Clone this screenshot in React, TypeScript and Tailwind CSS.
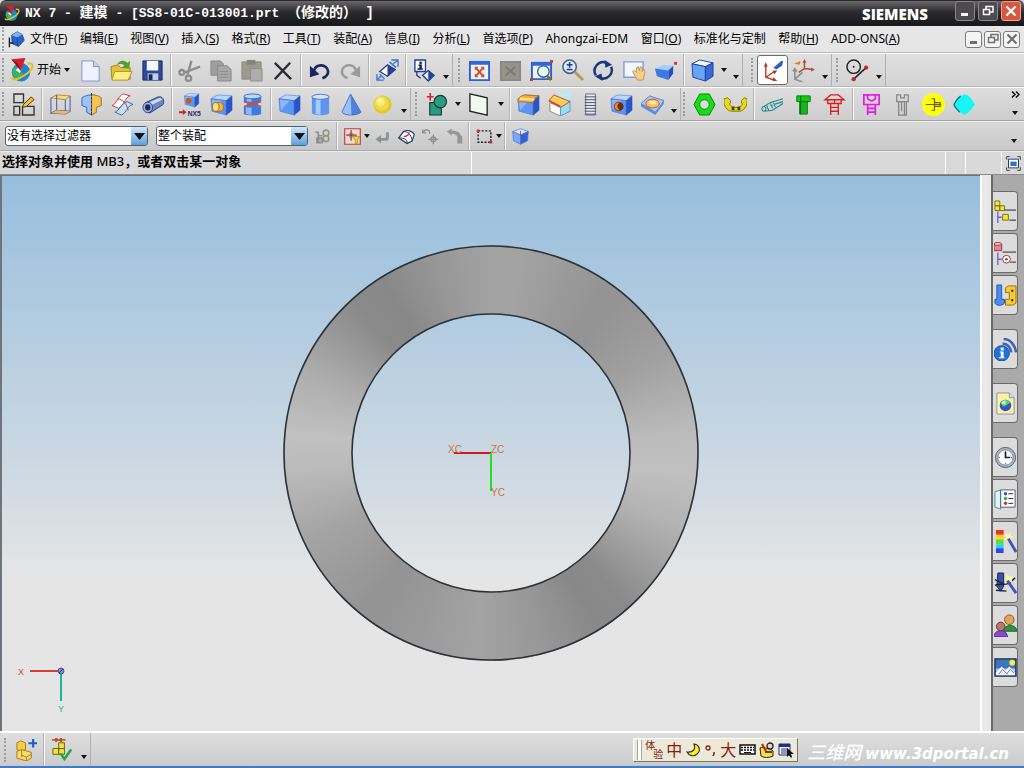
import React from 'react';

interface CubeProps {
  x?: number;
  y?: number;
  s?: number;
}

const Cube: React.FC<CubeProps> = ({ x = 0, y = 0, s = 1 }) => (
  <g transform={`translate(${x} ${y}) scale(${s})`}>
    <path d="M1 6 8 2 23 3 17 8Z" fill="#b9d6ff" stroke="#3b62c4" strokeWidth=".5" />
    <path d="M1 6 17 8V23L2 19Z" fill="#5c96f4" stroke="#3b62c4" strokeWidth=".5" />
    <path d="M2 7 12 8 3 18Z" fill="#8ab8fb" />
    <path d="M17 8 23 3V18L17 23Z" fill="#2856c8" stroke="#2a4cae" strokeWidth=".5" />
  </g>
);

const icons: Record<string, React.ReactNode> = {
  nx: (
    <>
      <circle cx="12" cy="14" r="8.5" fill="#1b86c9" />
      <path d="M5 10a9 9 0 0 0 5 12l4-6-6-7Z" fill="#3bb35d" />
      <path d="M7 12a6 6 0 0 1 6-2l-2 5Z" fill="#d8f4ff" />
      <path d="M3 2 16 1 12 13Z" fill="#d3202c" />
      <path d="M3 2 12 13 9 6Z" fill="#8e1020" />
      <path d="M18 6c7-1 5 5 0 9-5 4-14 8-15 4" fill="none" stroke="#e8bd2c" strokeWidth="2" />
    </>
  ),
  part: (
    <>
      <path d="M5 6 13 1 20 5 23 13 15 22 6 18Z" fill="#2a62c8" stroke="#163c8c" />
      <path d="M5 6 13 1 20 5 13 9Z" fill="#7fb0f2" />
      <path d="M13 9v12" stroke="#163c8c" />
      <path d="M2 9v14M2 17h6" stroke="#222" strokeWidth="2" fill="none" />
    </>
  ),
  new: (
    <>
      <path d="M3 2h12l6 6v15H3Z" fill="#eef3ff" stroke="#7d92cf" />
      <path d="M15 2v6h6" fill="#c3d0f2" stroke="#7d92cf" />
    </>
  ),
  open: (
    <>
      <path d="M1 8 8 6l3 3h10v12H2Z" fill="#e3c238" stroke="#a4851a" />
      <path d="M5 13h18l-4 9H2Z" fill="#fbee83" stroke="#b3942a" />
      <path d="M7 6c3-5 8-5 11-2l3-2-1 8-8-1 3-2c-2-2-5-2-8-1Z" fill="#4fa32c" />
    </>
  ),
  save: (
    <>
      <path d="M2 2h20v20H2Z" fill="#2c4a9c" stroke="#14265e" />
      <path d="M6 2h12v10H6Z" fill="#f4f7ff" />
      <path d="M7 15h11v7H7Z" fill="#c4cde0" />
      <path d="M8 16h4v6H8Z" fill="#14265e" />
    </>
  ),
  cut: (
    <g fill="none" stroke="#8d8d8d" strokeWidth="2.400">
      <path d="M14 2 10 16M23 8 7 14" />
      <circle cx="4" cy="14" r="2.500" />
      <circle cx="11" cy="20" r="2.800" />
    </g>
  ),
  copy: (
    <>
      <path d="M2 2h10l3 3v12H2Z" fill="#9e9e9e" stroke="#8a8a8a" />
      <path d="M9 7h10l4 4v12H9Z" fill="#a8a8a8" stroke="#858585" />
      <path d="M11 13h9M11 16h9M11 19h9" stroke="#8a8a8a" />
    </>
  ),
  paste: (
    <>
      <path d="M2 3h20v18H2Z" fill="#9c9c8c" stroke="#898980" />
      <path d="M7 1h9v5H7Z" fill="#858580" />
      <path d="M11 10h12v13H11Z" fill="#adadab" stroke="#8c8c8c" />
    </>
  ),
  delete: <path d="M4 4 21 21M20 4 4 21" stroke="#2d2d35" strokeWidth="2.400" fill="none" />,
  undo: (
    <>
      <path d="M6 13c2-9 14-8 15 0 0 4-3 6-6 7" fill="none" stroke="#1c2464" strokeWidth="2.800" />
      <path d="M2 7v12l10-3Z" fill="#1c2464" />
    </>
  ),
  redo: (
    <>
      <path d="M18 13C16 4 4 5 3 13c0 4 3 6 6 7" fill="none" stroke="#9b9b9b" strokeWidth="2.600" />
      <path d="M22 7v12l-10-3Z" fill="#9b9b9b" />
    </>
  ),
  orient: (
    <>
      <path d="M4 13 12 6 20 11 12 18Z" fill="#fff" stroke="#24408e" strokeWidth="1.400" />
      <path d="M12 6 20 11 12 18Z" fill="#24408e" />
      <path d="M1 16v6h7M16 1h7v7M1 22l4-4M23 1l-5 4M4 16l5 5M14 3l7 6" fill="none" stroke="#3c74cc" strokeWidth="1.400" />
    </>
  ),
  info: (
    <>
      <path d="M2 1h11v12H2Z" fill="#fff" stroke="#24408e" strokeWidth="1.400" />
      <path d="M7 3h2v2H7ZM6 6h3v4h1v1H5v-1h2V7H6Z" fill="#10205a" stroke="#10205a" strokeWidth=".6" />
      <path d="M10 17 16 12 22 17 16 23Z" fill="#e6efff" stroke="#24408e" strokeWidth="1.400" />
      <path d="M16 12 22 17 16 23Z" fill="#24408e" />
      <path d="M4 13v4l4 3" fill="none" stroke="#24408e" strokeWidth="1.400" />
    </>
  ),
  fit: (
    <>
      <path d="M2 3h20v19H2Z" fill="#eaf1ff" stroke="#2f5fc8" strokeWidth="2" />
      <path d="M2 2h20v4H2Z" fill="#2f66d8" />
      <path d="M8 9l8 9M16 9l-8 9" stroke="#d4501c" strokeWidth="2" />
      <path d="M7 8h4L7 12ZM17 8h-4l4 4ZM7 19h4l-4-4ZM17 19h-4l4-4Z" fill="#d4501c" />
    </>
  ),
  fitGray: (
    <>
      <path d="M2 3h20v19H2Z" fill="#94948c" stroke="#888" strokeWidth="2" />
      <path d="M7 8l10 9M17 8 7 17" stroke="#7c7c70" strokeWidth="2" />
    </>
  ),
  zoomWindow: (
    <>
      <path d="M2 4h20v17H2Z" fill="#eef4ff" stroke="#2f5fc8" strokeWidth="2" />
      <path d="M2 3h20v4H2Z" fill="#2f66d8" />
      <circle cx="14" cy="13" r="6" fill="#e4fbff" stroke="#34608a" strokeWidth="1.400" />
      <path d="M18 18l4 4" stroke="#8a6a20" strokeWidth="2.600" />
      <path d="M0 20h3v3H0ZM21 1h3v3h-3Z" fill="#d83030" />
    </>
  ),
  zoom: (
    <>
      <circle cx="9" cy="8" r="7" fill="#dceaff" stroke="#53607c" strokeWidth="1.600" />
      <path d="M9 3v6M6 6h6M6 11h6" stroke="#1c3c9c" strokeWidth="1.600" />
      <path d="M14 13l9 9" stroke="#b89a52" strokeWidth="3" />
    </>
  ),
  rotate: (
    <>
      <path d="M4 17A9 9 0 0 1 15 4M20 8A9 9 0 0 1 9 20" fill="none" stroke="#1d377d" strokeWidth="2.600" />
      <path d="M13 1l8 5-7 3ZM11 23l-8-5 7-3Z" fill="#1d377d" />
    </>
  ),
  pan: (
    <>
      <path d="M1 3h20v16H1Z" fill="#f3f7ff" stroke="#7f9edc" strokeWidth="1.500" />
      <path d="M10 13l2-1 2 2V9l2-1 1 4 1-4 2 1v4l2-2 1 2-2 9h-6Z" fill="#f7cf8a" stroke="#b9843a" strokeWidth=".8" />
    </>
  ),
  perspective: (
    <>
      <path d="M1 10 10 6l10 1-5 5Z" fill="#a8ccff" />
      <path d="M1 10l14 2v10L3 18Z" fill="#3d7ae0" />
      <path d="M15 12l5-5v8l-5 7Z" fill="#2450b8" />
      <path d="M21 3h3v3h-3Z" fill="#d83030" />
    </>
  ),
  shaded: (
    <>
      <path d="M1 5 9 1 23 4 15 8Z" fill="#f4faff" stroke="#1d44a2" />
      <path d="M1 5l14 3v15L2 19Z" fill="#68a4f7" stroke="#1d44a2" />
      <path d="M15 8l8-4v14l-8 5Z" fill="#3668d6" stroke="#1d44a2" />
    </>
  ),
  wcs: (
    <>
      <path d="M5 6v13l9 3M5 19l9-6" fill="none" stroke="#b63522" strokeWidth="1.400" />
      <path d="M3 8l2-5 2 5ZM12 12l5 0-3 4ZM13 19l4 4-5 0Z" fill="#b63522" />
      <path d="M13 9l8-7 2 0-1 5-6 4Z" fill="#2b5fc4" />
    </>
  ),
  wcsDynamic: (
    <>
      <path d="M3 11v10l8 3M3 21l8-7M1 13l2-3 2 3" fill="none" stroke="#8d8d8d" strokeWidth="1.600" />
      <path d="M13 2v8l9 1M13 10l-6 4" fill="none" stroke="#b84434" strokeWidth="1.500" />
      <path d="M2 5l7-3-1 4Z" fill="#e07a2a" />
      <path d="M11 4l2-4 2 4ZM20 9l4 2-4 2Z" fill="#b84434" />
    </>
  ),
  curve: (
    <>
      <circle cx="8" cy="8" r="7" fill="none" stroke="#222" strokeWidth="1.500" />
      <circle cx="8" cy="8" r="1" fill="#222" />
      <path d="M8 21 21 9" stroke="#222" strokeWidth="1.600" />
      <circle cx="8" cy="21" r="2.200" fill="#c32828" />
      <circle cx="21" cy="9" r="2.200" fill="#c32828" />
    </>
  ),
  sketch: (
    <>
      <path d="M2 1h10v9H2ZM2 14h6v9H2ZM11 14h12v9H11Z" fill="none" stroke="#333" strokeWidth="1.400" />
      <path d="M12 12 20 4l3 3-8 7-4 1Z" fill="#f2c132" stroke="#4a3a12" />
    </>
  ),
  extrude: (
    <>
      <path d="M2 5 8 2l14 1-5 4Z" fill="#f8dc7a" stroke="#b98d2a" />
      <path d="M2 5v16l6-3 14 1V3M17 7v15M8 2v16M2 21l15 1 5-3" fill="none" stroke="#4262b4" strokeWidth="1.100" />
      <path d="M2 21l6-3 14 1-5 3Z" fill="#f6b45a" />
    </>
  ),
  revolve: (
    <>
      <path d="M2 5c6-4 14-4 20 0v8l-5 2v5l-5 3-5-3v-5l-5-2Z" fill="#9cc3f7" stroke="#3a63b4" />
      <path d="M12 2c4 0 8 1 10 3v8l-5 2v5l-5 3Z" fill="#f6c453" stroke="#b3802a" />
      <path d="M12 0v24" stroke="#234" strokeDasharray="3 1" />
    </>
  ),
  sweep: (
    <>
      <path d="M1 13C5 13 8 2 13 1l7 2c-5 1-7 11-12 13Z" fill="#fff" stroke="#c23a3a" />
      <path d="M4 20C9 19 11 10 17 9l6 3c-6 1-7 9-12 11Z" fill="#bfe0f5" stroke="#3a6aa8" />
      <path d="M7 6c5 1 9 4 11 12" fill="none" stroke="#c23a3a" />
    </>
  ),
  tube: (
    <>
      <path d="M4 10 17 4c4-1 7 3 5 8L8 21Z" fill="#6f88c2" stroke="#2c3f7a" />
      <path d="M7 10 19 5l2 2-12 6Z" fill="#cddcf7" />
      <ellipse cx="6" cy="15" rx="5" ry="5.500" fill="#9cb2e2" stroke="#2c3f7a" />
      <ellipse cx="6" cy="15" rx="2.800" ry="3.200" fill="#1d2852" />
    </>
  ),
  nx5: (
    <>
      <Cube x={5} y={-1} s={0.68} />
      <circle cx="10" cy="8" r="3" fill="#c85a1c" />
      <path d="M0 19h4v-2l4 3-4 3v-2H0Z" fill="#d82020" />
      <text x="9" y="24" fontSize="7" fontWeight="bold" fill="#222a66" fontFamily="Liberation Sans, sans-serif">NX5</text>
    </>
  ),
  boss: (
    <>
      <Cube />
      <path d="M6 10h5c4 0 4 9 0 9H6Z" fill="#f4b83a" stroke="#a86a14" />
      <ellipse cx="6" cy="14.500" rx="3.500" ry="4.500" fill="#fbe08a" stroke="#a86a14" />
    </>
  ),
  groove: (
    <>
      <path d="M3 3h18v7h-3v4h3v8c-3 2-15 2-18 0v-8h3v-4H3Z" fill="#3f78de" />
      <path d="M6 4h5v5H6ZM5 15h6v8l-6-1Z" fill="#8db9fb" />
      <ellipse cx="12" cy="3.500" rx="9" ry="2.500" fill="#bcd8ff" stroke="#4068b8" />
      <path d="M3 9c5 2 13 2 18 0M3 14c5-2 13-2 18 0" fill="none" stroke="#d4502c" strokeWidth="1.400" />
    </>
  ),
  block: <Cube />,
  cylinder: (
    <>
      <path d="M3 4v17c4 3 14 3 18 0V4Z" fill="#5e95ee" />
      <path d="M7 5h5v18l-5-1Z" fill="#a8cbff" />
      <ellipse cx="12" cy="4" rx="9" ry="2.600" fill="#d4e6ff" stroke="#4a76c8" />
    </>
  ),
  cone: (
    <>
      <path d="M11 1 22 20c-5 4-17 4-20 0Z" fill="#4f80e0" />
      <path d="M11 1 12 23C8 23 3 22 2 20Z" fill="#9cc0fb" />
      <path d="M11 1 22 20c-5 4-17 4-20 0Z" fill="none" stroke="#2e55b0" strokeWidth=".7" />
    </>
  ),
  sphere: (
    <>
      <circle cx="12" cy="12" r="9.500" fill="#e2c828" />
      <circle cx="11" cy="11" r="7.500" fill="#efdc44" />
      <circle cx="10" cy="9" r="4.500" fill="#f8ec78" />
      <circle cx="9" cy="8" r="2" fill="#fdf8b0" />
    </>
  ),
  unite: (
    <>
      <path d="M5 10h12v13H5Z" fill="#2a9c80" stroke="#123c34" strokeWidth="1.200" />
      <circle cx="16" cy="9" r="6.500" fill="#2a9c80" stroke="#123c34" strokeWidth="1.200" />
      <path d="M2 4h7M5.500 0v8" stroke="#d22" strokeWidth="1.600" />
    </>
  ),
  datum: <path d="M2 1 20 5V23L2 19Z" fill="#f0faef" stroke="#222" strokeWidth="1.400" />,
  edgeBlend: (
    <>
      <Cube />
      <path d="M1 8c0-3 3-5 7-6l15 1c-4 1-6 3-6 7L1 9Z" fill="#f9a93c" stroke="#b2701c" />
      <path d="M3 6l15 1" stroke="#ffe58a" strokeWidth="2.400" />
    </>
  ),
  chamfer: (
    <>
      <path d="M2 10l11 5v9L2 19Z" fill="#fff" stroke="#a8805a" />
      <path d="M13 15 23 8v11l-10 5Z" fill="#9adcf4" stroke="#5a9cc4" />
      <path d="M9 0h15v8Z" fill="#b4ecfa" />
      <path d="M1 8 6 2l17 7-10 6Z" fill="#f8cf5e" stroke="#c0522a" />
      <path d="M1 8l12 6" stroke="#d83a2a" strokeWidth="1.600" />
    </>
  ),
  thread: (
    <>
      <path d="M7 1h10v22H7Z" fill="#e6e9f2" stroke="#666d80" />
      <path d="M6 4h12M6 7h12M6 10h12M6 13h12M6 16h12M6 19h12M6 22h12" stroke="#4a5266" />
    </>
  ),
  hole: (
    <>
      <Cube />
      <circle cx="9" cy="14" r="4.500" fill="#f08a2c" stroke="#7c3410" />
      <path d="M10 10a4 4 0 0 1 0 8c-3-2-3-6 0-8Z" fill="#6c2c10" />
    </>
  ),
  emboss: (
    <>
      <path d="M0 11 9 3l15 5-9 12Z" fill="#a8c8f4" stroke="#5c83c4" />
      <path d="M0 11v3l15 9v-3ZM15 23l9-12V8l-9 12Z" fill="#5d8ce0" />
      <ellipse cx="12" cy="11" rx="7" ry="4.500" fill="#f9c65a" stroke="#d0502a" />
      <ellipse cx="12" cy="10" rx="4" ry="2" fill="#ffeeb0" />
    </>
  ),
  hexNut: (
    <>
      <path d="M7 1h10l6 11-6 11H7L1 12Z" fill="#12e012" stroke="#08820c" />
      <circle cx="12" cy="12" r="5" fill="#dcdcdc" stroke="#08820c" />
    </>
  ),
  clamp: (
    <>
      <path d="M0 6l4-1 3 3-1 4 3 3h7l3-3-1-4 3-3 3 1c1 7-3 13-8 13H8C3 19-1 13 0 6Z" fill="#e8da18" stroke="#887c08" />
      <path d="M8 14h3v4H8ZM14 14h3v4h-3Z" fill="#4c4408" />
    </>
  ),
  pin: (
    <g fill="none" stroke="#1c8a8e" strokeWidth="1.100">
      <path d="M3 14 10 10l13-4M4 19l8-1 11-7M6 13l2 5M10 11l2 5M13 10l2 5M10 13l13-4" />
      <ellipse cx="3" cy="16.500" rx="2" ry="2.500" />
    </g>
  ),
  bolt: (
    <>
      <path d="M5 3h14v6H5Z" fill="#12c81a" stroke="#087a0c" />
      <path d="M8 9h8v13H8Z" fill="#18b420" stroke="#087a0c" />
      <path d="M9 3v19" stroke="#086a0c" />
    </>
  ),
  valve: (
    <path d="M8 2h8l6 5H2ZM5 7v4h14V7M8 11v12M16 11v12M8 15h8M8 19h8M12 7v4" fill="none" stroke="#da2020" strokeWidth="1.400" />
  ),
  screwM: (
    <path d="M4 2h16v10H4ZM8 12v11M16 12v11M8 16h8M8 20h8M8 2v4l3 2h2l3-2V2" fill="none" stroke="#e61ae6" strokeWidth="1.800" />
  ),
  screwG: (
    <path d="M6 2h4v3h4V2h4v7H6ZM8 9v14h8V9M11 9v10M14 9v14" fill="none" stroke="#858585" strokeWidth="1.300" />
  ),
  yellowDot: (
    <>
      <circle cx="12" cy="12" r="12" fill="#fdfd12" />
      <path d="M4 12h9M10 6h3v12h-3M13 12h7M13 10h6v4h-6" fill="none" stroke="#6a6400" strokeWidth="1.300" />
    </>
  ),
  cyanDot: (
    <>
      <path d="M12 1C18 3 20 7 23 12c-3 4-6 8-11 11C7 20 3 17 1 12 4 7 7 4 12 1Z" fill="#16f6f6" />
      <path d="M8 3C4 6 3 8 1 12c1 3 3 5 6 8" fill="none" stroke="#0f7c7c" strokeWidth="1.400" />
    </>
  ),
  findGray: (
    <>
      <path d="M2 6h4v5h6M6 11v9M4 14h8v7H4Z" fill="#a7a7a7" stroke="#8e8e8e" strokeWidth="2" />
      <circle cx="17" cy="7" r="4" fill="none" stroke="#959580" strokeWidth="2.200" />
      <circle cx="17" cy="15" r="4" fill="none" stroke="#959580" strokeWidth="2.200" />
    </>
  ),
  snap: (
    <>
      <path d="M1 1h22v22H1Z" fill="#f3d8d0" stroke="#c43a3a" strokeWidth="1.600" />
      <path d="M10 3v15M3 10h15" stroke="#333" strokeWidth="1.400" />
      <circle cx="10" cy="10" r="3" fill="none" stroke="#c43a3a" />
      <path d="M12 12h10l-3 5v5h-3v-5Z" fill="#f4d231" stroke="#a68a14" />
    </>
  ),
  back: <path d="M21 6v8c0 3-2 4-5 4h-6v4l-8-6 8-6v4h5c2 0 2-1 2-3V6Z" fill="#8d9494" />,
  face: (
    <>
      <path d="M1 14 8 5c5-3 12-1 15 4l-3 9-7 4Z" fill="#fff" stroke="#28365c" strokeWidth="1.600" />
      <path d="M8 5c6 0 10 4 12 12M13 22c0-6-4-8-12-8" fill="none" stroke="#28365c" strokeWidth="1.400" />
      <path d="M8 12c4 0 7-2 8-6" fill="none" stroke="#d83a3a" strokeWidth="1.600" />
    </>
  ),
  rotatePoint: (
    <g fill="none" stroke="#8e8e8e" strokeWidth="1.800">
      <path d="M2 6c2-5 9-5 9 2M1 2v5h5" />
      <circle cx="16" cy="16" r="3.500" />
      <path d="M16 9v14M9 16h14" />
    </g>
  ),
  rotateCut: <path d="M1 5 8 1v3c8 0 12 2 13 7l2 1v10h-7V12c-2-3-5-4-8-4v3Z" fill="#969696" />,
  marquee: (
    <>
      <path d="M3 4h18v16H3Z" fill="none" stroke="#222" strokeWidth="2" strokeDasharray="3 2" />
      <path d="M1 2h4v4H1ZM19 18h4v4h-4Z" fill="#d83030" />
    </>
  ),
  cubeWire: (
    <>
      <path d="M1 5 12 1l11 4-11 5Z" fill="#dbe9ff" stroke="#4b76d4" />
      <path d="M1 5l11 5v13L2 18Z" fill="#78a8f7" stroke="#4b76d4" />
      <path d="M12 10l11-5-1 13-10 5Z" fill="#2e62d6" stroke="#4b76d4" />
      <path d="M12 4v7" stroke="#d83030" strokeWidth="1.200" />
    </>
  ),
  fullscreen: (
    <>
      <path d="M1 6V1h5M18 1h5v5M23 18v5h-5M6 23H1v-5" fill="none" stroke="#444" strokeWidth="1.600" />
      <path d="M4 5h16v14H4Z" fill="#fff" stroke="#244060" strokeWidth="1.600" />
      <path d="M7 9h10v7H7Z" fill="#2f72c4" />
    </>
  ),
  assemblyNav: (
    <>
      <path d="M1 1h5v5H1ZM1 6h5v5H1ZM6 6h5v5H6ZM9 15h6v6H9Z" fill="#f3e63a" stroke="#7d720e" />
      <path d="M11 10.500h12" stroke="#222" />
      <path d="M4 12v12M4 18h4" stroke="#6a5fd0" strokeWidth="1.400" />
      <path d="M16 21h7" stroke="#222" />
    </>
  ),
  partNav: (
    <>
      <path d="M0 2h8v7H0Z" fill="#e08a90" stroke="#9c3038" />
      <ellipse cx="4" cy="2" rx="4" ry="1.500" fill="#f8d0d0" stroke="#9c3038" />
      <path d="M9 10.500h14M17 21h6" stroke="#222" />
      <path d="M4 11v13M4 18h4" stroke="#6a5fd0" strokeWidth="1.400" />
      <circle cx="13" cy="18" r="4" fill="#fff" stroke="#9c3038" />
      <circle cx="13" cy="18" r="1.300" fill="#9c3038" />
    </>
  ),
  reuse: (
    <>
      <path d="M3 1h5v15h3v4c-3 3-8 3-10 0v-4h2Z" fill="#4e8cf0" stroke="#2455b0" />
      <path d="M12 4l3-2h8v18l-3 2h-8v-6h4V9h-4Z" fill="#f5cb31" stroke="#96700c" />
      <path d="M18 6h2v2h-2ZM18 16h2v2h-2Z" fill="#222" />
    </>
  ),
  web: (
    <>
      <path d="M10 1c7 0 12 6 13 14M9 6c5 0 8 3 9 9" fill="none" stroke="#3c62ba" strokeWidth="2.600" />
      <circle cx="8" cy="16" r="8" fill="#1f72d8" stroke="#164a9c" />
      <path d="M7 10h3v3H7ZM6 14h4v6h1v1H5v-1h2v-5H6Z" fill="#fff" />
    </>
  ),
  history: (
    <>
      <path d="M3 1h13l5 5v17H3Z" fill="#fbf3a0" stroke="#8a92a8" />
      <path d="M16 1v5h5" fill="#cfd8ee" stroke="#8a92a8" />
      <circle cx="12" cy="14" r="6" fill="#3b52c4" />
      <path d="M7 11c3-4 8-4 10 0l-6 4c-2 0-4-2-4-4Z" fill="#5cd070" />
      <path d="M8 12a4 4 0 0 1 4-3v4Z" fill="#d4f4e4" />
    </>
  ),
  clock: (
    <>
      <circle cx="12" cy="12" r="10.500" fill="#a9bccd" stroke="#4c5c6c" />
      <circle cx="12" cy="12" r="8" fill="#fff" stroke="#6f8496" />
      <path d="M12 6v6h5" fill="none" stroke="#222" strokeWidth="1.800" />
      <path d="M12 5v1M12 18v1M5 12h1M18 12h1" stroke="#222" />
    </>
  ),
  roles: (
    <>
      <path d="M1 4 7 2v20l-6-2Z" fill="#d9f5f5" stroke="#4c8c94" />
      <path d="M7 2h15v18H7Z" fill="#fff" stroke="#555c70" />
      <path d="M15 6h5M15 11h5M15 16h5" stroke="#222" />
      <circle cx="12" cy="6" r="1.800" fill="#3558c8" />
      <circle cx="12" cy="11" r="1.800" fill="#32b04c" />
      <circle cx="12" cy="16" r="1.800" fill="#d02c50" />
    </>
  ),
  palette: (
    <>
      <path d="M2 0h8v5H2Z" fill="#f03020" />
      <path d="M2 5h8v5H2Z" fill="#f8d820" />
      <path d="M2 10h8v5H2Z" fill="#58e040" />
      <path d="M2 15h8v4H2Z" fill="#28d0f0" />
      <path d="M2 19h8v5H2Z" fill="#3048e8" />
      <path d="M12 3l3 2 3-3-1 4 4 1-4 2v4l-3-3-4 1 2-3Z" fill="#fbf8a0" />
      <path d="M15 9 23 23" stroke="#4452ba" strokeWidth="3" />
    </>
  ),
  wizard: (
    <>
      <path d="M4 1h6v14l-3 5-4-5Z" fill="#3c50a8" stroke="#17235c" />
      <path d="M1 14c5-3 12 3 21-8M2 19l11 1M1 8l8 4" fill="none" stroke="#222" strokeWidth="1.400" />
      <path d="M13 2l3 3 4-1-2 4 2 3-5-1-3 3v-5Z" fill="#fbf8a0" />
      <path d="M14 9 23 22" stroke="#4452ba" strokeWidth="3" />
    </>
  ),
  users: (
    <>
      <path d="M10 18c0-8 14-8 14 0Z" fill="#2f9440" stroke="#1c6628" />
      <circle cx="16" cy="6" r="5" fill="#dfa55c" stroke="#8c5a1c" />
      <path d="M0 24c0-9 14-9 14 0Z" fill="#8848d0" stroke="#55289c" />
      <circle cx="7" cy="13" r="4.500" fill="#b87a68" stroke="#60342a" />
    </>
  ),
  scene: (
    <>
      <path d="M1 3h22v18H1Z" fill="#3c76b8" stroke="#1a2c4c" strokeWidth="1.400" />
      <path d="M2 13h20v3H2Z" fill="#9cc4e8" />
      <path d="M2 20v-3l6-6 4 4 4-4 6 6v3Z" fill="#f2f5ff" />
      <path d="M5 19l4-5 5 5M13 19l4-5 4 4" fill="none" stroke="#6a70b8" />
      <circle cx="19" cy="7" r="3" fill="#f8ec50" />
    </>
  ),
  addPart: (
    <>
      <path d="M3 5 7 3l5 2v7l-5 2-4-2Z" fill="#f6cd48" stroke="#a87c10" />
      <path d="M3 14l5-2 10 3v6l-5 3-10-3Z" fill="#f8dc70" stroke="#a87c10" />
      <path d="M8 18l5 2v4M13 20l5-3M8 12v8" fill="none" stroke="#a87c10" />
      <path d="M20 1v9M15 5.500h9" stroke="#1d5cc8" strokeWidth="2.200" />
    </>
  ),
  constrain: (
    <>
      <path d="M8 5h6v6H8ZM2 11h6v6H2ZM8 11h6v6H8Z" fill="#f3e63a" stroke="#6a6208" />
      <path d="M1 2h4V0l3 2-3 2V2ZM15 2h-4V0L8 2l3 2V2Z" fill="#d05828" stroke="#b04418" />
      <path d="M10 16l4 6 7-10" fill="none" stroke="#1fa838" strokeWidth="2.600" />
    </>
  ),
};

interface IconProps {
  name: string;
  className?: string;
}

const Icon: React.FC<IconProps> = ({ name, className = 'size-[22px]' }) => (
  <svg className={`${className} shrink-0`} viewBox="0 0 24 24" aria-hidden="true">
    {icons[name]}
  </svg>
);

const Arrow = () => (
  <svg className="w-[6px] h-[4px] shrink-0" viewBox="0 0 6 4" aria-hidden="true">
    <path d="M0 0h6L3 4Z" fill="#111" />
  </svg>
);

const Grip = () => (
  <span className="mx-[2px] w-[4px] h-[24px] shrink-0 border-l-2 border-dotted border-[#9c9c9c]" />
);

const Sep = () => (
  <span className="mx-[2px] w-[2px] self-stretch shrink-0 border-l border-[#b4b4b4] bg-[#f6f6f6]" />
);

const Tool: React.FC<{ name: string; active?: boolean; small?: boolean }> = ({ name, active, small }) => (
  <button
    aria-label={name}
    className={`flex items-center justify-center shrink-0 ${small ? 'w-[24px] h-[24px]' : 'w-[31px] h-[30px]'} ${
      active ? 'bg-white border border-[#6c6c6c] rounded-[3px]' : ''
    }`}
  >
    <Icon name={name} className={small ? 'size-[17px]' : 'size-[23px]'} />
  </button>
);

const Drop: React.FC<{ small?: boolean }> = ({ small }) => (
  <button
    aria-label="More"
    className={`flex items-center justify-center h-[24px] shrink-0 ${small ? 'w-[6px]' : 'w-[12px]'}`}
  >
    <Arrow />
  </button>
);

const Overflow = () => (
  <button aria-label="Toolbar options" className="flex items-end justify-center w-[12px] h-[18px] shrink-0 self-end pb-[7px]">
    <Arrow />
  </button>
);

// '|' separator, '~' grip, 'v' drop-down arrow, '.' toolbar overflow
const Tools: React.FC<{ items: string[]; small?: boolean }> = ({ items, small }) => (
  <>
    {items.map((item, i) => {
      if (item === '|') return <Sep key={i} />;
      if (item === '~') return <Grip key={i} />;
      if (item === 'v') return <Drop key={i} small={small} />;
      if (item === '.') return <Overflow key={i} />;
      return <Tool key={i} name={item} small={small} active={item === 'wcs'} />;
    })}
  </>
);

const Group: React.FC<{ children: React.ReactNode; className?: string }> = ({ children, className = '' }) => (
  <div className={`flex items-center shrink-0 border-r border-[#b0b0b0] ${className}`}>{children}</div>
);

const menus: [string, string][] = [
  ['文件', 'F'],
  ['编辑', 'E'],
  ['视图', 'V'],
  ['插入', 'S'],
  ['格式', 'R'],
  ['工具', 'T'],
  ['装配', 'A'],
  ['信息', 'I'],
  ['分析', 'L'],
  ['首选项', 'P'],
  ['Ahongzai-EDM', ''],
  ['窗口', 'O'],
  ['标准化与定制', ''],
  ['帮助', 'H'],
  ['ADD-ONS', 'A'],
];

const WindowGlyph: React.FC<{ kind: string }> = ({ kind }) => (
  <svg className="size-[12px]" viewBox="0 0 12 12" fill="none" stroke="currentColor" aria-hidden="true">
    {kind === 'min' && <path d="M2 9.500h7" strokeWidth="3" />}
    {kind === 'max' && <path d="M4 4V1.500h7V7H8M1.500 4.500h6v5h-6Z" strokeWidth="1.500" />}
    {kind === 'close' && <path d="M1.500 1.500l9 9M10.500 1.500l-9 9" strokeWidth="2.200" />}
  </svg>
);

const TitleBar = () => (
  <header className="flex items-center h-[26px] shrink-0 bg-linear-to-b from-[#6a686c] via-[#2b2a2d] via-45% to-[#18181a] border-t border-[#2a2a2a] rounded-t-md pl-[3px] pr-[3px]">
    <Icon name="nx" className="size-[17px]" />
    <h1 className="ml-[5px] flex-1 text-white font-bold text-[13px] whitespace-pre font-['Liberation_Mono','Noto_Sans_CJK_SC',monospace]">
      NX 7 - <span className="text-[14px]">建模</span> - [SS8-01C-013001.prt <span className="text-[14px]">（修改的） ]</span>
    </h1>
    <span className="mr-[27px] text-white font-extrabold text-[15px] font-['Open_Sans',sans-serif]">SIEMENS</span>
    <div className="flex gap-[3px] self-start">
      {['min', 'max', 'close'].map((kind) => (
        <button
          key={kind}
          aria-label={kind}
          className={`flex items-center justify-center size-[20px] rounded-[3px] border text-white ${
            kind === 'close' ? 'bg-[#d9573f] border-[#f0a090]' : 'bg-[#4d4b4f] border-[#8a888c]'
          }`}
        >
          <WindowGlyph kind={kind} />
        </button>
      ))}
    </div>
  </header>
);

const MenuBar = () => (
  <nav className="flex items-center h-[27px] shrink-0 bg-[#e6e6e6] border-b border-[#bdbdbd] pr-[4px]">
    <Grip />
    <Icon name="part" className="size-[17px]" />
    <div className="flex flex-1 justify-between ml-[5px] mr-[65px] whitespace-nowrap">
      {menus.map(([label, key]) => (
        <button key={label}>
          {label}
          {key && (
            <>
              (<u>{key}</u>)
            </>
          )}
        </button>
      ))}
    </div>
    <div className="flex gap-[2px] text-[#707070]">
      {['min', 'max', 'close'].map((kind) => (
        <button
          key={kind}
          aria-label={`${kind} document`}
          className="flex items-center justify-center size-[17px] rounded-[3px] border border-[#7c7c7c] bg-[#f4f4f4]"
        >
          <WindowGlyph kind={kind} />
        </button>
      ))}
    </div>
  </nav>
);

const StandardBar = () => (
  <div className="flex h-[34px] shrink-0 border-t border-t-white border-b border-b-[#b9b9b9] bg-linear-to-b from-[#e0e0e0] to-[#d2d2d2]">
    <Group>
      <Grip />
      <button className="flex items-center gap-[3px] w-[67px] shrink-0">
        <Icon name="nx" className="size-[26px]" />
        <span className="whitespace-nowrap">开始</span>
        <Arrow />
      </button>
      <Tools items={['new', 'open', 'save', '|', 'cut', 'copy', 'paste', 'delete', '|', 'undo', 'redo', '|', 'orient', '|', 'info', '.']} />
    </Group>
    <Group className="pl-[3px]">
      <Tools items={['~', 'fit', 'fitGray', 'zoomWindow', 'zoom', 'rotate', 'pan', 'perspective', '|', 'shaded', 'v', '.']} />
    </Group>
    <Group className="pl-[6px]">
      <Tools items={['~', 'wcs', 'wcsDynamic', '.']} />
    </Group>
    <Group className="pl-[2px]">
      <Tools items={['~', 'curve', '.']} />
    </Group>
  </div>
);

const FeatureBar = () => (
  <div className="flex h-[34px] shrink-0 border-t border-t-white border-b border-b-[#a5a5a5] bg-linear-to-b from-[#dedede] to-[#cecece]">
    <Group>
      <Tools
        items={['~', 'sketch', '|', 'extrude', 'revolve', 'sweep', 'tube', '|', 'nx5', 'boss', 'groove', '|', 'block', 'cylinder', 'cone', 'sphere', '.']}
      />
    </Group>
    <Group className="pl-[2px]">
      <Tools items={['~', 'unite', 'v', 'datum', 'v', '|', 'edgeBlend', 'chamfer', 'thread', 'hole', 'emboss', '.']} />
    </Group>
    <div className="flex items-center flex-1 min-w-0">
      <Tools items={['~', 'hexNut', 'clamp', '|', 'pin', 'bolt', 'valve', '|', 'screwM', 'screwG', 'yellowDot', 'cyanDot']} />
      <button aria-label="More buttons" className="flex flex-col items-center justify-between ml-auto mr-[4px] h-[26px] w-[10px] pb-[2px]">
        <svg className="w-[9px] h-[7px]" viewBox="0 0 9 7" fill="none" stroke="#111" strokeWidth="1.500" aria-hidden="true">
          <path d="M1 .5 4 3.500l-3 3M5 .5 8 3.500l-3 3" />
        </svg>
        <Arrow />
      </button>
    </div>
  </div>
);

const Combo: React.FC<{ label: string; value: string; className: string }> = ({ label, value, className }) => (
  <div className={`relative shrink-0 ${className}`}>
    <select
      aria-label={label}
      className="appearance-none w-full h-[20px] pl-[1px] leading-[16px] bg-white border border-[#50606c] rounded-[3px]"
    >
      <option>{value}</option>
    </select>
    <span className="absolute right-[1px] top-[1px] flex items-center justify-center w-[16px] h-[18px] bg-linear-to-b from-[#cfe6fb] to-[#5d9fdc] pointer-events-none">
      <svg className="w-[11px] h-[7px]" viewBox="0 0 11 7" aria-hidden="true">
        <path d="M0 0h11L5.500 7Z" fill="#111" />
      </svg>
    </span>
  </div>
);

const SelectionBar = () => (
  <div className="flex items-center h-[30px] shrink-0 border-t border-t-[#efefef] border-b border-b-[#a9a9a9] bg-linear-to-b from-[#d9d9d9] to-[#c8c8c8] pl-[5px] pr-[4px]">
    <Combo label="选择过滤器" value="没有选择过滤器" className="w-[143px]" />
    <Combo label="选择范围" value="整个装配" className="w-[152px] ml-[8px]" />
    <div className="flex items-center ml-[2px] flex-1 self-stretch">
      <Tools
        small
        items={['findGray', '|', 'snap', 'v', 'back', 'face', 'rotatePoint', 'rotateCut', '|', 'marquee', 'v', '|', 'cubeWire']}
      />
    </div>
    <Overflow />
  </div>
);

const StatusBar = () => (
  <div className="flex h-[24px] shrink-0 bg-[#d9d9d9] border-t border-t-[#ececec] border-b border-b-[#8c8c8c]">
    <p className="w-[46%] shrink-0 pl-[2px] text-[13px] leading-[18px] font-bold whitespace-nowrap">
      选择对象并使用 <span className="font-medium">MB3</span>，或者双击某一对象
    </p>
    <div className="flex-1 border-l border-white" />
    <div className="w-[20px] border-l border-white" />
    <div className="w-[36px] border-l border-white" />
    <button aria-label="全屏" className="flex items-center justify-center w-[23px] border-l border-white">
      <Icon name="fullscreen" className="size-[15px]" />
    </button>
  </div>
);

const shade =
  'bg-[conic-gradient(#a2a2a2_0deg,#a3a3a3_8deg,#949494_34deg,#949494_40deg,#a0a0a0_60deg,#bcbcbc_85deg,#c0c0c0_96deg,#b2b2b2_112deg,#8a8a8a_138deg,#888888_148deg,#989898_166deg,#a3a3a3_184deg,#949494_214deg,#949494_220deg,#a4a4a4_245deg,#bcbcbc_266deg,#c0c0c0_276deg,#aeaeae_293deg,#8a8a8a_317deg,#888888_328deg,#989898_345deg,#a2a2a2_360deg)]';

const Viewport = () => (
  <main className="relative flex flex-1 items-center justify-center min-w-0 overflow-hidden pb-[2px] border-l-2 border-t border-[#6d747a] bg-linear-to-b from-[#97bedd] via-[#cfdae3] via-55% to-[#e5e5e5] to-72%">
    <div className="relative w-[416px] aspect-square shrink-0">
      <div
        className={`w-full h-full rounded-full ${shade} [mask-image:radial-gradient(circle_closest-side,transparent_67%,black_67%)]`}
      />
      <svg className="absolute inset-0 w-full h-full" viewBox="0 0 416 416" fill="none">
        <circle cx="208" cy="208" r="207" stroke="#2b3238" strokeWidth="1.600" />
        <circle cx="208" cy="208" r="139" stroke="#2b3238" strokeWidth="1.600" />
        <path d="M171 208h37" stroke="#d01820" strokeWidth="2" />
        <path d="M208 208v38" stroke="#20e020" strokeWidth="2" />
        <g fill="#cc7440" fontSize="10" fontFamily="Liberation Sans, sans-serif">
          <text x="165" y="208">XC</text>
          <text x="208" y="208">ZC</text>
          <text x="208" y="251">YC</text>
        </g>
      </svg>
    </div>
    <svg className="absolute left-[14px] bottom-[14px] w-[56px] h-[54px]" viewBox="0 0 56 54" fill="none">
      <path d="M14 8h29" stroke="#da3a3a" strokeWidth="2" />
      <path d="M45 10v28" stroke="#18b890" strokeWidth="2" />
      <circle cx="45" cy="8" r="3" fill="#8a8fc0" stroke="#4a50a0" />
      <path d="M43 10l4-4" stroke="#2a3080" />
      <text x="2" y="12" fill="#da3a3a" fontSize="9" fontFamily="Liberation Sans, sans-serif">X</text>
      <text x="42" y="49" fill="#18b890" fontSize="9" fontFamily="Liberation Sans, sans-serif">Y</text>
    </svg>
  </main>
);

const resources = [
  ['assemblyNav', 'partNav', 'reuse'],
  ['web'],
  ['history'],
  ['clock', 'roles', 'palette', 'wizard', 'users', 'scene'],
];

const ResourceBar = () => (
  <aside className="flex flex-col gap-[14px] w-[33px] shrink-0 pt-[16px] border-l-2 border-[#6a6a6a] bg-[#aaaaaa]">
    {resources.map((group) => (
      <div key={group[0]} className="flex flex-col gap-[2px]">
        {group.map((name) => (
          <button
            key={name}
            aria-label={name}
            className="flex items-center justify-center w-[25px] h-[40px] bg-[#dcdcdc] border border-l-0 border-[#6c6c6c] rounded-r-[4px]"
          >
            <Icon name={name} className="size-[23px]" />
          </button>
        ))}
      </div>
    ))}
  </aside>
);

const InputMethodBar = () => (
  <div className="flex items-center gap-[3px] h-[24px] px-[3px] shrink-0 bg-[#ece9d8] border border-t-white border-l-white border-r-[#77766a] border-b-[#77766a] text-[#8a1c10]">
    <span className="w-[5px] h-[20px] border-x border-[#aca899] bg-white" />
    <button className="flex flex-col text-[10px] leading-[9px] w-[18px]">
      <span className="self-start">体</span>
      <span className="self-end">验</span>
    </button>
    <button className="text-[16px] leading-[20px]">中</button>
    <button aria-label="半角">
      <svg className="w-[16px] h-[16px]" viewBox="0 0 16 16">
        <path d="M9 2c6 1 7 7 3 10-3 3-8 2-10-2 6 1 9-3 7-8Z" fill="#fbf020" stroke="#333" strokeWidth="1.200" />
      </svg>
    </button>
    <button aria-label="标点">
      <svg className="w-[13px] h-[14px]" viewBox="0 0 13 14" fill="none" stroke="#8a1c10" strokeWidth="1.300">
        <circle cx="4" cy="5" r="2" />
        <path d="M10 9v2l-1 2" strokeWidth="1.500" />
      </svg>
    </button>
    <button className="text-[16px] leading-[20px]">大</button>
    <button aria-label="软键盘">
      <svg className="w-[17px] h-[11px]" viewBox="0 0 17 11">
        <path d="M1 1h15v9H1Z" fill="#fff" stroke="#111" strokeWidth="1.500" />
        <path d="M2 3.500h13M2 6h13" stroke="#111" strokeWidth="1.500" strokeDasharray="2 1" />
        <path d="M5 8.500h7" stroke="#111" />
      </svg>
    </button>
    <button aria-label="工具">
      <svg className="w-[16px] h-[16px]" viewBox="0 0 16 16">
        <path d="M1 6c3-2 6 2 9 0l4 3v5c-4 2-9 2-12 0Z" fill="#f4e040" stroke="#222" />
        <path d="M3 2l4 7" stroke="#d03010" strokeWidth="2.400" />
        <circle cx="11" cy="4" r="3" fill="#dcdcdc" stroke="#222" strokeWidth="1.300" />
        <path d="M6 10h7" stroke="#222" strokeWidth="1.600" />
      </svg>
    </button>
    <button aria-label="菜单">
      <svg className="w-[16px] h-[16px]" viewBox="0 0 16 16">
        <path d="M1 2h11v11H1Z" fill="#fff" stroke="#1c2c7c" />
        <path d="M1 2h11v3H1Z" fill="#1c2c9c" />
        <path d="M3 7h7M3 9h7M3 11h7" stroke="#1c2c7c" />
        <path d="M9 6v9l2-2 2 3 1-1-1-3h3Z" fill="#111" />
      </svg>
    </button>
  </div>
);

const BottomBar = () => (
  <footer className="flex items-center h-[37px] shrink-0 border-t-2 border-t-white border-b-2 border-b-[#3f7cc4] bg-linear-to-b from-[#dedede] to-[#cbcbcb] pl-[2px] pr-[15px]">
    <Group className="self-stretch">
      <Tools items={['~', 'addPart', '|', 'constrain', '.']} />
    </Group>
    <div className="flex items-center gap-[9px] ml-auto">
      <InputMethodBar />
      <p className="pt-[8px] text-white text-[18px] leading-[22px] italic font-medium whitespace-nowrap font-['Liberation_Sans','Noto_Sans_CJK_SC',sans-serif]">
        三维网
        <a href="#" className="ml-[4px] text-[15px] font-bold font-['DejaVu_Sans',sans-serif]">
          www.3dportal.cn
        </a>
      </p>
    </div>
  </footer>
);

const App: React.FC = () => (
  <div className="flex flex-col h-screen overflow-hidden bg-[#d6d6d6] text-black text-[12px] leading-[16px] font-['Noto_Sans','Noto_Sans_CJK_SC',sans-serif]">
    <TitleBar />
    <MenuBar />
    <StandardBar />
    <FeatureBar />
    <SelectionBar />
    <StatusBar />
    <div className="flex flex-1 min-h-0">
      <Viewport />
      <div className="w-[11px] shrink-0 border-l-2 border-white bg-[#e8e8e8]" />
      <ResourceBar />
    </div>
    <BottomBar />
  </div>
);

export default App;
